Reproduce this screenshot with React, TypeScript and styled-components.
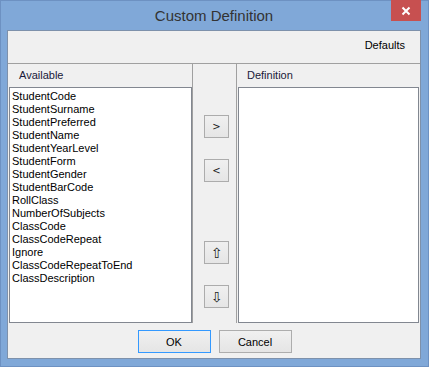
import React from 'react';
import styled, { createGlobalStyle } from 'styled-components';

const GlobalStyle = createGlobalStyle`
  html, body { margin: 0; padding: 0; background: #fff; }
  body { font-family: "Liberation Sans", Arial, sans-serif; font-size: 11px; color: #000; }
  * { box-sizing: border-box; }
`;

const Window = styled.div`
  position: relative;
  width: 429px;
  height: 367px;
  background: #80a8d8;
  border: 1px solid #6d91c2;
  padding: 0 7px 7px 6px;
  display: flex;
  flex-direction: column;
`;

const TitleBar = styled.div`
  height: 29px;
  display: flex;
  align-items: center;
  justify-content: center;
  font-size: 15px;
  color: #333;
  padding-bottom: 1px;
`;

const CloseButton = styled.div`
  position: absolute;
  top: -1px;
  right: 7px;
  width: 30px;
  height: 21px;
  background: #c75050;
  display: flex;
  align-items: center;
  justify-content: center;
`;

const Client = styled.div`
  flex: 1;
  display: flex;
  flex-direction: column;
  background: #f0f0f0;
  border: 1px solid #7e91ab;
  min-height: 0;
`;

const Toolbar = styled.div`
  height: 33px;
  border-bottom: 1px solid #a0a0a0;
  display: flex;
  align-items: center;
  justify-content: flex-end;
  padding: 0 15px 4px 0;
  font-size: 11px;
`;

const Main = styled.div`
  display: flex;
  height: 259px;
`;

const Panel = styled.div<{ $width: number; $divider?: boolean }>`
  width: ${({ $width }) => $width}px;
  display: flex;
  flex-direction: column;
  border-right: ${({ $divider }) => ($divider ? '1px solid #a0a0a0' : 'none')};
`;

const PanelHeader = styled.div<{ $indent: number }>`
  height: 23px;
  display: flex;
  align-items: center;
  padding-left: ${({ $indent }) => $indent}px;
  padding-bottom: 1px;
  color: #1a1a3a;
`;

const ListBox = styled.ul<{ $left: number; $right: number }>`
  flex: 1;
  margin: 0 ${({ $right }) => $right}px 0 ${({ $left }) => $left}px;
  padding: 2px 0 0 2px;
  list-style: none;
  background: #fff;
  border: 1px solid #828790;
  overflow: hidden;
`;

const ListItem = styled.li`
  height: 13px;
  line-height: 13px;
  white-space: nowrap;
`;

const Middle = styled.div`
  width: 44px;
  border-right: 1px solid #a0a0a0;
  display: flex;
  flex-direction: column;
  padding: 51px 0 0 11px;
`;

const ArrowButton = styled.div<{ $gap: number; $big?: boolean }>`
  width: 25px;
  height: 23px;
  margin-top: ${({ $gap }) => $gap}px;
  border: 1px solid #acacac;
  background: linear-gradient(#f0f0f0, #e5e5e5);
  display: flex;
  align-items: center;
  justify-content: center;
  font-family: "DejaVu Sans", sans-serif;
  font-size: ${({ $big }) => ($big ? 14 : 10)}px;
  color: #1a1a1a;
`;

const BottomBar = styled.div`
  flex: 1;
  display: flex;
  justify-content: center;
  gap: 8px;
  padding: 7px 0 0 1px;
`;

const DialogButton = styled.div<{ $focused?: boolean }>`
  width: 73px;
  height: 23px;
  border: 1px solid ${({ $focused }) => ($focused ? '#3399ff' : '#adadad')};
  background: linear-gradient(#f0f0f0, #e5e5e5);
  display: flex;
  align-items: center;
  justify-content: center;
  font-size: 11px;
`;

const available = [
  'StudentCode',
  'StudentSurname',
  'StudentPreferred',
  'StudentName',
  'StudentYearLevel',
  'StudentForm',
  'StudentGender',
  'StudentBarCode',
  'RollClass',
  'NumberOfSubjects',
  'ClassCode',
  'ClassCodeRepeat',
  'Ignore',
  'ClassCodeRepeatToEnd',
  'ClassDescription',
];

const App: React.FC = () => {
  return (
    <Window>
      <GlobalStyle />
      <TitleBar>Custom Definition</TitleBar>
      <CloseButton>
        <svg width="10" height="10" viewBox="0 0 10 10">
          <path d="M1.5 1.5 L8.5 8.5 M8.5 1.5 L1.5 8.5" stroke="#fff" strokeWidth="2" />
        </svg>
      </CloseButton>
      <Client>
        <Toolbar>Defaults</Toolbar>
        <Main>
          <Panel $width={185} $divider>
            <PanelHeader $indent={11}>Available</PanelHeader>
            <ListBox $left={1} $right={0}>
              {available.map((item) => (
                <ListItem key={item}>{item}</ListItem>
              ))}
            </ListBox>
          </Panel>
          <Middle>
            <ArrowButton $gap={0}>&gt;</ArrowButton>
            <ArrowButton $gap={21}>&lt;</ArrowButton>
            <ArrowButton $gap={59} $big>⇧</ArrowButton>
            <ArrowButton $gap={21} $big>⇩</ArrowButton>
          </Middle>
          <Panel $width={183}>
            <PanelHeader $indent={10}>Definition</PanelHeader>
            <ListBox $left={1} $right={1} />
          </Panel>
        </Main>
        <BottomBar>
          <DialogButton $focused>OK</DialogButton>
          <DialogButton>Cancel</DialogButton>
        </BottomBar>
      </Client>
    </Window>
  );
};

export default App;
